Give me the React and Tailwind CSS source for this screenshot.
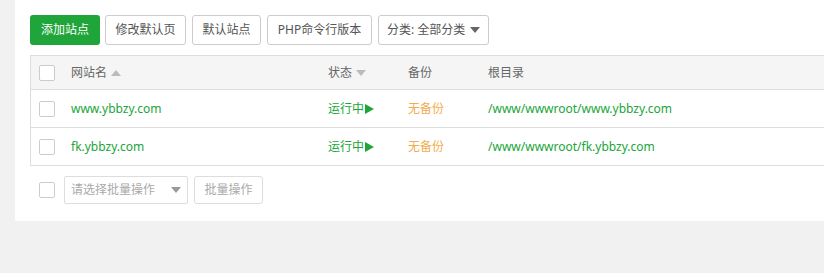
import React from 'react'

const font = { fontFamily: '"Noto Sans", "Noto Sans CJK SC", sans-serif' }

function Check() {
    return <span className="block w-4 h-4 border border-[#ccc] rounded-[2px] bg-white" />
}

function Caret({ up, color = '#999' }) {
    return (
        <svg width="10" height="6" viewBox="0 0 10 6" className="inline-block">
            <path d={up ? 'M0 6 L5 0 L10 6 Z' : 'M0 0 L5 6 L10 0 Z'} fill={color} />
        </svg>
    )
}

const sites = [
    { name: 'www.ybbzy.com', path: '/www/wwwroot/www.ybbzy.com' },
    { name: 'fk.ybbzy.com', path: '/www/wwwroot/fk.ybbzy.com' },
]

function Btn({ w, children }) {
    return (
        <button className={'h-[30px] border border-[#ccc] rounded-[3px] bg-white text-[#555] text-xs ' + w}>
            {children}
        </button>
    )
}

export default function App() {
    return (
        <div className="w-[824px] h-[273px] bg-[#f1f1f1] overflow-hidden text-xs" style={font}>
            <div className="ml-[15px] w-[860px] bg-white pt-[15px] pl-[15px] pb-[17px]">
                <div className="flex gap-[6px]">
                    <button className="h-[30px] w-[70px] mr-[-1px] rounded-[3px] bg-[#20a53a] text-white text-xs">添加站点</button>
                    <Btn w="w-[81px]">修改默认页</Btn>
                    <Btn w="w-[69px]">默认站点</Btn>
                    <Btn w="w-[105px]">PHP命令行版本</Btn>
                    <button className="h-[30px] w-[111px] pl-[8px] pr-[8px] border border-[#ccc] rounded-[3px] bg-white text-[#555] text-xs flex items-center justify-between">
                        <span>分类: 全部分类</span>
                        <Caret color="#666" />
                    </button>
                </div>

                <div className="mt-[10px] border border-[#ddd] text-xs">
                    <div className="flex h-[34px] items-center bg-[#f5f5f5] border-b border-[#ddd] text-[#666]">
                        <div className="w-[32px] pl-[8px]"><Check /></div>
                        <div className="w-[257px] pl-2 flex items-center gap-[4px]">网站名 <Caret up color="#bbb" /></div>
                        <div className="w-[80px] pl-2 flex items-center gap-[4px]">状态 <Caret color="#bbb" /></div>
                        <div className="w-[80px] pl-2">备份</div>
                        <div className="flex-1 pl-2">根目录</div>
                    </div>
                    {sites.map((s, i) => (
                        <div key={s.name} className={'flex items-center ' + (i < sites.length - 1 ? 'h-[38px] border-b border-[#ddd]' : 'h-[37px]')}>
                            <div className="w-[32px] pl-[8px]"><Check /></div>
                            <div className="w-[257px] pl-2 text-[#20a53a]">{s.name}</div>
                            <div className="w-[80px] pl-2 text-[#20a53a] flex items-center">
                                运行中
                                <svg width="9" height="10" viewBox="0 0 9 10" className="ml-[1px]"><path d="M0 0 L9 5 L0 10 Z" fill="#20a53a" /></svg>
                            </div>
                            <div className="w-[80px] pl-2 text-[#f0ad4e]">无备份</div>
                            <div className="flex-1 pl-2 text-[#20a53a]">{s.path}</div>
                        </div>
                    ))}
                </div>

                <div className="mt-[10px] flex items-center">
                    <div className="pl-[9px]"><Check /></div>
                    <div className="ml-[9px] h-[28px] w-[124px] border border-[#ddd] rounded-[2px] flex items-center justify-between px-[6px] text-[#aaa]">
                        <span>请选择批量操作</span>
                        <Caret color="#999" />
                    </div>
                    <button className="ml-[6px] h-[28px] w-[69px] border border-[#ddd] rounded-[3px] text-[#aaa] text-xs bg-white">批量操作</button>
                </div>
            </div>
        </div>
    )
}
